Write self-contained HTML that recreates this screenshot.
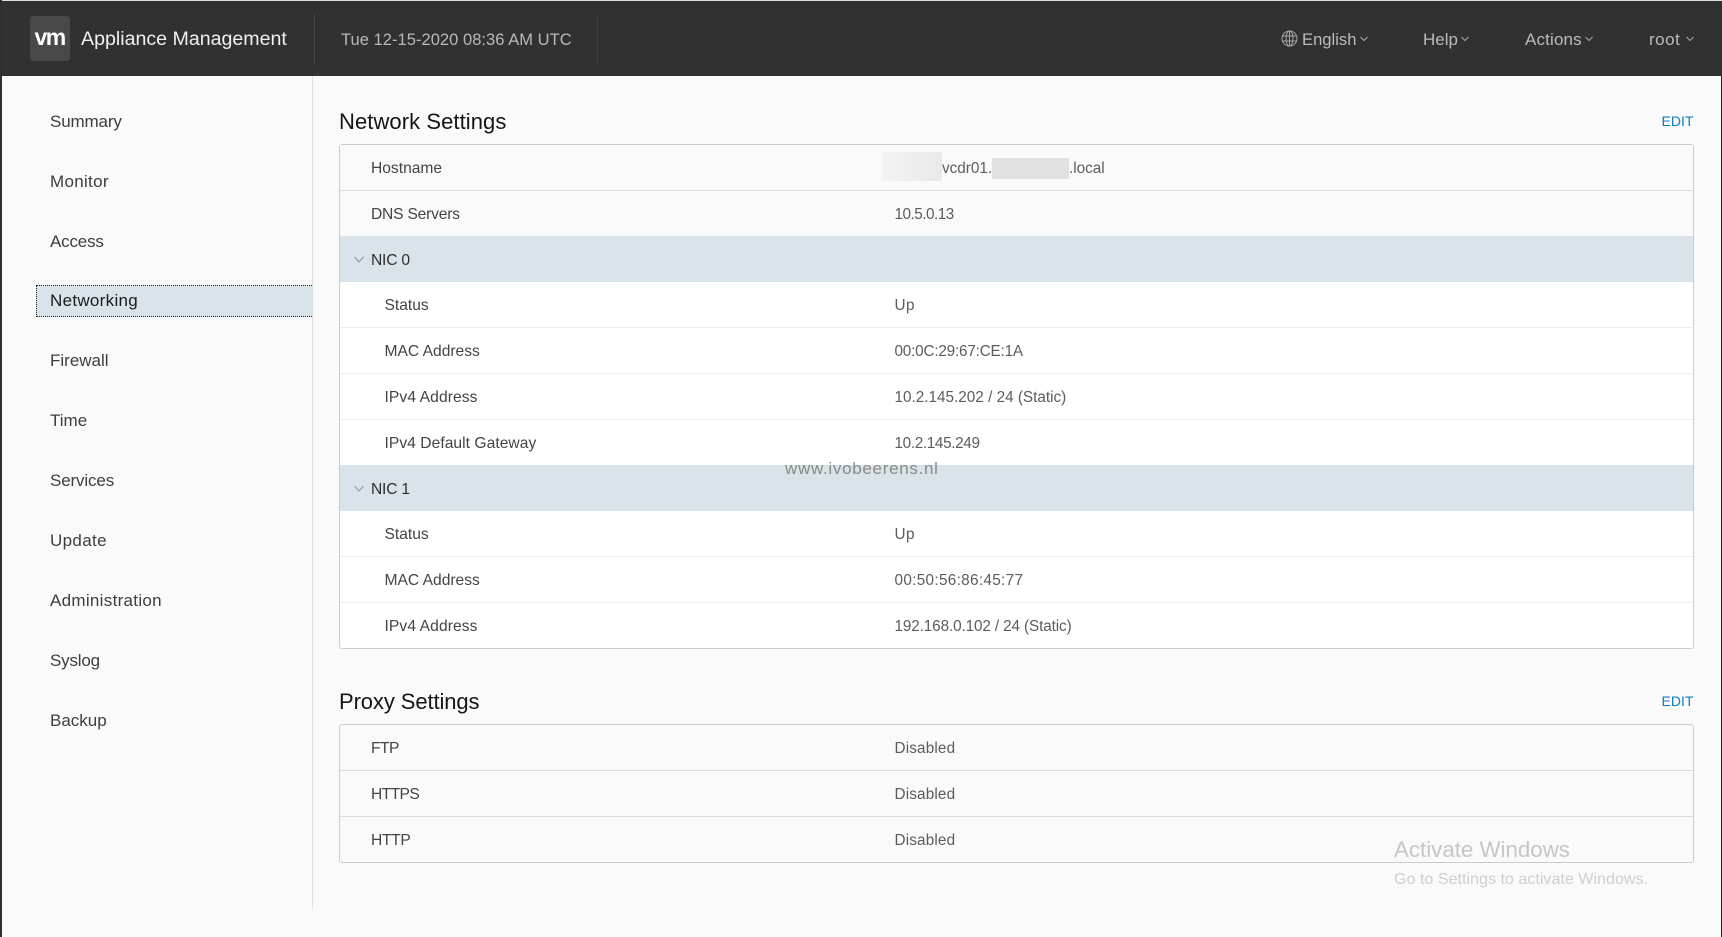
<!DOCTYPE html>
<html><head><meta charset="utf-8"><title>Appliance Management</title>
<style>
html,body{margin:0;padding:0;width:1722px;height:937px;overflow:hidden;background:#fafafa;font-family:"Liberation Sans",sans-serif}
#p{position:relative;width:1722px;height:937px;overflow:hidden}
#p div,#p span,#p svg{position:absolute}
.t{white-space:nowrap;line-height:20px;height:20px}
.n{left:50px;font-size:17px;color:#3e3e3e}
.l{font-size:15.6px;color:#444}
.v{left:894.5px;font-size:15.3px;color:#5c5c5c}
.h{font-size:22px;color:#151515;left:339px}
.e{font-size:14px;color:#0a7fbf;letter-spacing:.05px;left:1661.5px}
.r{left:340px;width:1353px;height:1px}
.top{color:#bbb;font-size:17px;letter-spacing:0}
</style></head><body><div id="p">
<div style="left:0;top:0;width:1722px;height:1px;background:#ddd"></div>
<div style="left:0;top:1px;width:1722px;height:75px;background:#313131"></div>
<div style="left:0;top:0;width:2px;height:937px;background:#2f2f2f"></div>
<div style="left:1721px;top:76px;width:1px;height:861px;background:#222"></div>
<div style="left:30px;top:16px;width:40px;height:45px;background:#494949;border-radius:3px"></div>
<div class="t" style="left:34.5px;top:27px;font-size:23px;font-weight:bold;color:#fff;letter-spacing:-1.6px">vm</div>
<div class="t" style="left:81px;top:29px;font-size:19.6px;color:#f0f0f0">Appliance Management</div>
<div style="left:314px;top:14px;width:1px;height:50px;background:#464646"></div>
<div class="t" style="left:341px;top:30px;font-size:16.5px;color:#b9b9b9;letter-spacing:.04px">Tue 12-15-2020 08:36 AM UTC</div>
<div style="left:597px;top:14px;width:1px;height:50px;background:#3e3e3e"></div>
<svg style="left:1281px;top:30px" width="17" height="17" viewBox="0 0 17 17" fill="none" stroke="#a8a8a8" stroke-width="1"><circle cx="8.5" cy="8.5" r="7.5"/><ellipse cx="8.5" cy="8.5" rx="3.5" ry="7.5"/><path d="M8.5 1v15M1.5 6h14M1.5 11h14"/></svg>
<div class="t top" style="left:1302px;top:30px;font-size:16.6px">English</div>
<svg style="left:1360px;top:36px" width="8" height="6" viewBox="0 0 8 6" fill="none" stroke="#aaa" stroke-width="1"><path d="M.5 1l3.5 3.5L7.500 1"/></svg>
<div class="t top" style="left:1423px;top:30px">Help</div>
<svg style="left:1461px;top:36px" width="8" height="6" viewBox="0 0 8 6" fill="none" stroke="#aaa" stroke-width="1"><path d="M.5 1l3.500 3.500L7.500 1"/></svg>
<div class="t top" style="left:1525px;top:30px;letter-spacing:.15px">Actions</div>
<svg style="left:1585px;top:36px" width="8" height="6" viewBox="0 0 8 6" fill="none" stroke="#aaa" stroke-width="1"><path d="M.5 1l3.500 3.500L7.500 1"/></svg>
<div class="t top" style="left:1649px;top:30px;letter-spacing:.5px">root</div>
<svg style="left:1686px;top:36px" width="8" height="6" viewBox="0 0 8 6" fill="none" stroke="#aaa" stroke-width="1"><path d="M.5 1l3.500 3.500L7.500 1"/></svg>

<div style="left:312px;top:76px;width:1px;height:833px;background:#e0e0e0"></div>
<div style="left:36px;top:285px;width:275px;height:30px;background:#d9e3ea;border:1px dotted #222;border-right:0"></div>
<div class="t n" style="top:112px;letter-spacing:-.15px">Summary</div>
<div class="t n" style="top:172px;letter-spacing:.3px">Monitor</div>
<div class="t n" style="top:232px;letter-spacing:-.18px">Access</div>
<div class="t n" style="top:291px;color:#1a1a1a;letter-spacing:.3px">Networking</div>
<div class="t n" style="top:351px">Firewall</div>
<div class="t n" style="top:411px">Time</div>
<div class="t n" style="top:471px;letter-spacing:-.14px">Services</div>
<div class="t n" style="top:531px;letter-spacing:.35px">Update</div>
<div class="t n" style="top:591px;letter-spacing:.3px">Administration</div>
<div class="t n" style="top:651px;letter-spacing:-.18px">Syslog</div>
<div class="t n" style="top:711px">Backup</div>

<div class="t h" style="top:112px;letter-spacing:.07px">Network Settings</div>
<div class="t e" style="top:111px">EDIT</div>
<div style="left:339px;top:144px;width:1355px;height:505px;border:1px solid #ccc;border-radius:3px;box-sizing:border-box;background:#fff"></div>
<div style="left:340px;top:145px;width:1353px;height:46px;background:#fafafa"></div>
<div style="left:340px;top:191px;width:1353px;height:45px;background:#fafafa"></div>
<div style="left:340px;top:236px;width:1353px;height:46px;background:#d9e3ea"></div>
<div style="left:340px;top:465px;width:1353px;height:46px;background:#d9e3ea"></div>
<div class="r" style="top:190px;background:#ddd"></div>
<div class="r" style="top:327px;background:#eee"></div>
<div class="r" style="top:373px;background:#eee"></div>
<div class="r" style="top:419px;background:#eee"></div>
<div class="r" style="top:556px;background:#eee"></div>
<div class="r" style="top:602px;background:#eee"></div>

<div class="t l" style="left:371px;top:158.5px">Hostname</div>
<div style="left:882px;top:152px;width:60px;height:29px;background:linear-gradient(90deg,#f3f3f3,#e9e9e9)"></div>
<div class="t v" style="left:942px;top:158.5px">vcdr01.</div>
<div style="left:992px;top:158px;width:77px;height:21px;background:#e1e1e1"></div>
<div class="t v" style="left:1069px;top:158.5px">.local</div>
<div class="t l" style="left:371px;top:204.5px;letter-spacing:-.2px">DNS Servers</div>
<div class="t v" style="top:204.5px;letter-spacing:-.5px">10.5.0.13</div>
<svg style="left:354px;top:256px" width="10" height="8" viewBox="0 0 10 8" fill="none" stroke="#8a949a" stroke-width="1"><path d="M.5 1l4.500 5 4.500-5"/></svg>
<div class="t l" style="left:371px;top:250.5px;color:#2e2e2e;letter-spacing:-.2px">NIC 0</div>
<div class="t l" style="left:384.5px;top:295.5px">Status</div>
<div class="t v" style="top:295.5px;letter-spacing:.5px">Up</div>
<div class="t l" style="left:384.5px;top:341.500px">MAC Address</div>
<div class="t v" style="top:341.500px;letter-spacing:-.2px">00:0C:29:67:CE:1A</div>
<div class="t l" style="left:384.5px;top:387.500px;letter-spacing:.1px">IPv4 Address</div>
<div class="t v" style="top:387.500px">10.2.145.202 / 24 (Static)</div>
<div class="t l" style="left:384.5px;top:433.500px;letter-spacing:.05px">IPv4 Default Gateway</div>
<div class="t v" style="top:433.500px;letter-spacing:-.35px">10.2.145.249</div>
<svg style="left:354px;top:485px" width="10" height="8" viewBox="0 0 10 8" fill="none" stroke="#8a949a" stroke-width="1"><path d="M.5 1l4.500 5 4.500-5"/></svg>
<div class="t l" style="left:371px;top:479.5px;color:#2e2e2e;letter-spacing:-.2px">NIC 1</div>
<div class="t l" style="left:384.5px;top:524.5px">Status</div>
<div class="t v" style="top:524.5px;letter-spacing:.5px">Up</div>
<div class="t l" style="left:384.5px;top:570.5px">MAC Address</div>
<div class="t v" style="top:570.5px;letter-spacing:.32px">00:50:56:86:45:77</div>
<div class="t l" style="left:384.5px;top:616.5px;letter-spacing:.1px">IPv4 Address</div>
<div class="t v" style="top:616.5px;letter-spacing:-.12px">192.168.0.102 / 24 (Static)</div>

<div class="t" style="left:785px;top:459px;font-size:17px;color:#8a8a8a;letter-spacing:.7px">www.ivobeerens.nl</div>

<div class="t h" style="top:692px;letter-spacing:-.1px">Proxy Settings</div>
<div class="t e" style="top:691px">EDIT</div>
<div style="left:339px;top:724px;width:1355px;height:139px;border:1px solid #ccc;border-radius:3px;box-sizing:border-box"></div>
<div class="r" style="top:770px;background:#ddd"></div>
<div class="r" style="top:816px;background:#ddd"></div>
<div class="t l" style="left:371px;top:738.5px;letter-spacing:-.5px">FTP</div>
<div class="t v" style="top:738.5px;letter-spacing:.15px">Disabled</div>
<div class="t l" style="left:371px;top:784.5px;letter-spacing:-.6px">HTTPS</div>
<div class="t v" style="top:784.5px;letter-spacing:.15px">Disabled</div>
<div class="t l" style="left:371px;top:830.5px;letter-spacing:-.3px">HTTP</div>
<div class="t v" style="top:830.5px;letter-spacing:.15px">Disabled</div>

<div class="t" style="left:1394px;top:840px;font-size:22.3px;color:#c6c6c6">Activate Windows</div>
<div class="t" style="left:1394px;top:869px;font-size:16.1px;color:#cfcfcf">Go to Settings to activate Windows.</div>
</div></body></html>
